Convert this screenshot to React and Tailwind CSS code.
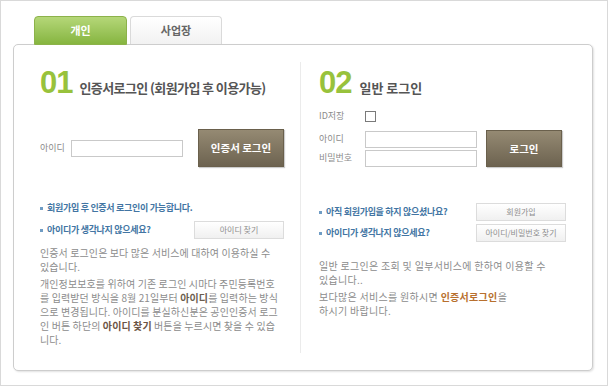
import React from "react";

const Bullet = ({ children }) => (
  <div className="flex items-center text-[9px] font-bold tracking-[-0.3px] text-[#4275a3] leading-[14px]">
    <span className="w-[3px] h-[3px] bg-[#6f9cc4] mr-[4px] shrink-0" />
    {children}
  </div>
);

const SmallButton = ({ children }) => (
  <div className="w-[90px] h-[18px] border border-[#dcdcdc] bg-linear-to-b from-white to-[#f0f0f0] flex items-center justify-center text-[8px] text-[#8e8e8e]">
    {children}
  </div>
);

const BrownButton = ({ children, className }) => (
  <div
    className={
      "border border-[#6a604c] bg-linear-to-b from-[#958a73] to-[#6d6350] shadow-[1px_1px_1px_rgba(0,0,0,0.2)] flex items-center justify-center text-[10.5px] font-bold text-white " +
      className
    }
  >
    {children}
  </div>
);

const Field = () => <div className="w-[112px] h-[17px] border border-[#c9c9c9] bg-white" />;

export default function App() {
  return (
    <div className="w-[608px] h-[386px] bg-white border border-[#d9d9d9] pt-[15px] pl-[12px] font-['Noto_Sans_CJK_KR',sans-serif]">
      {/* tabs */}
      <div className="flex gap-[3px] pl-[21px] h-[28px]">
        <div className="w-[93px] h-[29px] rounded-t-[4px] border border-[#8cb24a] bg-linear-to-b from-[#b5d778] to-[#86b53f] flex items-center justify-center text-[11px] font-bold text-white">
          개인
        </div>
        <div className="w-[92px] h-[28px] rounded-t-[4px] border border-b-0 border-[#dadada] bg-linear-to-b from-white to-[#f2f2f2] flex items-center justify-center text-[11px] font-bold text-[#666]">
          사업장
        </div>
      </div>

      {/* panel */}
      <div className="w-[580px] h-[327px] border border-[#cdcdcd] rounded-[5px] shadow-[1px_1px_2px_rgba(0,0,0,0.12)] flex bg-white">
        {/* 01 인증서 로그인 */}
        <div className="w-[286px] pl-[26px] pr-[16px] pt-[22px]">
          <div className="flex items-baseline">
            <span className="font-['Liberation_Sans',sans-serif] font-bold text-[31px] leading-[31px] text-[#98c23c] tracking-[-1px]">01</span>
            <span className="ml-[7px] text-[13px] font-semibold text-[#555] tracking-[-0.6px]">인증서로그인 (회원가입 후 이용가능)</span>
          </div>

          <div className="flex items-center mt-[31px]">
            <span className="text-[9px] text-[#8b8b8b] w-[31px]">아이디</span>
            <Field />
            <BrownButton className="ml-[15px] w-[86px] h-[38px]">인증서 로그인</BrownButton>
          </div>

          <div className="mt-[34px]">
            <Bullet>회원가입 후 인증서 로그인이 가능합니다.</Bullet>
            <div className="flex items-center justify-between mt-[6px] h-[18px]">
              <Bullet>아이디가 생각나지 않으세요?</Bullet>
              <SmallButton>아이디 찾기</SmallButton>
            </div>
          </div>

          <div className="mt-[7px] text-[10px] leading-[14px] text-[#8c8c8c] whitespace-nowrap tracking-[0.1px]">
            <p>
              인증서 로그인은 보다 많은 서비스에 대하여 이용하실 수<br />
              있습니다.
            </p>
            <p className="mt-[3px]">
              개인정보보호를 위하여 기존 로그인 시마다 주민등록번호<br />
              를 입력받던 방식을 8월 21일부터 <b className="text-[#6b5d4e]">아이디</b>를 입력하는 방식<br />
              으로 변경됩니다. 아이디를 분실하신분은 공인인증서 로그<br />
              인 버튼 하단의 <b className="text-[#6b5444]">아이디 찾기</b> 버튼을 누르시면 찾을 수 있습<br />
              니다.
            </p>
          </div>
        </div>

        <div className="w-px bg-[#ebebeb] my-[17px]" />

        {/* 02 일반 로그인 */}
        <div className="flex-1 pl-[18px] pr-[26px] pt-[22px]">
          <div className="flex items-baseline">
            <span className="font-['Liberation_Sans',sans-serif] font-bold text-[31px] leading-[31px] text-[#98c23c] tracking-[-1px]">02</span>
            <span className="ml-[8px] text-[13px] font-semibold text-[#555]">일반 로그인</span>
          </div>

          <div className="flex items-center mt-[11px] h-[14px]">
            <span className="text-[9px] text-[#8b8b8b] w-[46px]">ID저장</span>
            <div className="w-[11px] h-[11px] border border-[#7a7a7a] bg-white" />
          </div>

          <div className="flex items-center mt-[7px]">
            <div className="flex flex-col gap-[2px]">
              <div className="flex items-center">
                <span className="text-[9px] text-[#8b8b8b] w-[46px]">아이디</span>
                <Field />
              </div>
              <div className="flex items-center">
                <span className="text-[9px] text-[#8b8b8b] w-[46px]">비밀번호</span>
                <Field />
              </div>
            </div>
            <BrownButton className="ml-[9px] w-[76px] h-[37px]">로그인</BrownButton>
          </div>

          <div className="mt-[36px] flex flex-col gap-[3px]">
            <div className="flex items-center justify-between h-[18px]">
              <Bullet>아직 회원가입을 하지 않으셨나요?</Bullet>
              <SmallButton>회원가입</SmallButton>
            </div>
            <div className="flex items-center justify-between h-[18px]">
              <Bullet>아이디가 생각나지 않으세요?</Bullet>
              <SmallButton>아이디/비밀번호 찾기</SmallButton>
            </div>
          </div>

          <div className="mt-[17px] text-[10px] leading-[14px] text-[#8c8c8c] whitespace-nowrap tracking-[0.3px]">
            <p>
              일반 로그인은 조회 및 일부서비스에 한하여 이용할 수<br />
              있습니다..
            </p>
            <p className="mt-[3px]">
              보다많은 서비스를 원하시면 <b className="text-[#b8702e]">인증서로그인</b>을<br />
              하시기 바랍니다.
            </p>
          </div>
        </div>
      </div>
    </div>
  );
}
